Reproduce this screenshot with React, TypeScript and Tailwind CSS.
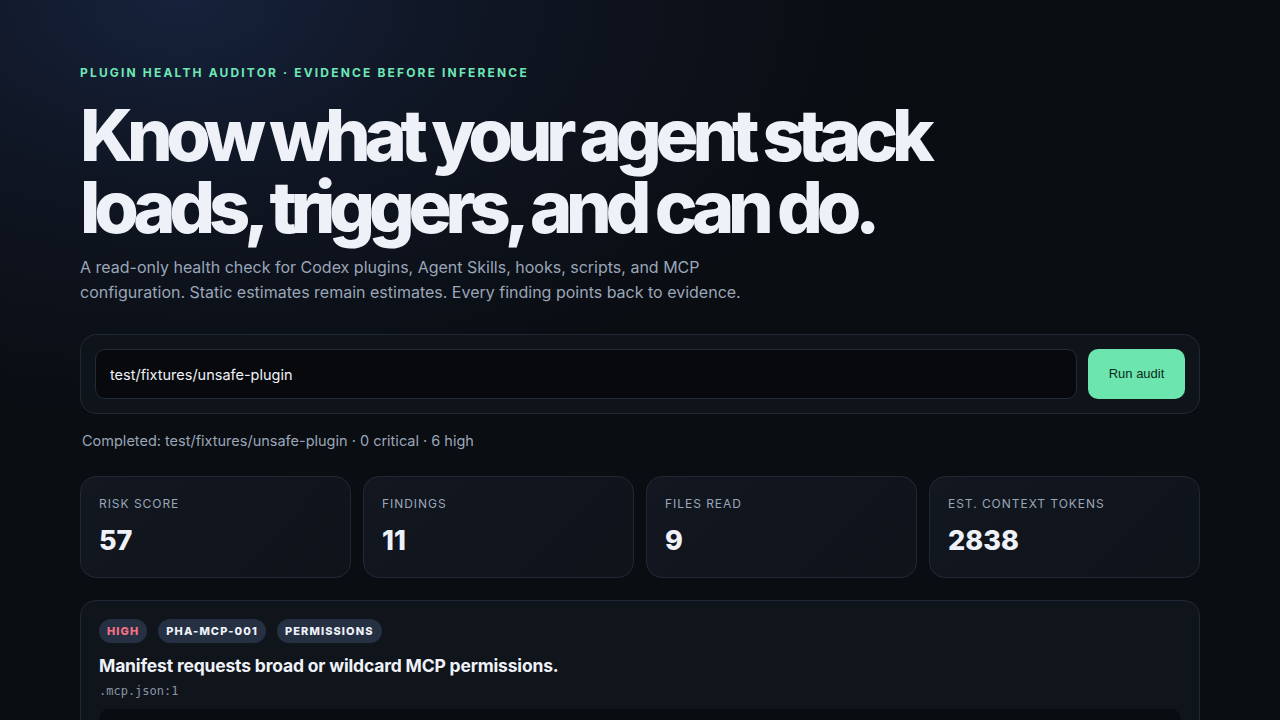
import { useState } from "react"

const STATS = [
    { label: "Risk score", value: "57" },
    { label: "Findings", value: "11" },
    { label: "Files read", value: "9" },
    { label: "Est. context tokens", value: "2838" },
]

export default function App() {
    const [target, setTarget] = useState("test/fixtures/unsafe-plugin")

    return (
        <div
            className="min-h-screen bg-[#0a0d12] text-[#e8edf5] bg-[radial-gradient(ellipse_700px_420px_at_180px_0px,#16223b_0%,#0f1522_45%,#0a0d12_100%)]"
            style={{ fontFamily: "Inter, 'Noto Sans', sans-serif" }}
        >
            <main className="mx-auto w-[1120px] pt-[64px] pb-16">
                <p className="text-[12px] font-bold uppercase tracking-[0.18em] text-[#6ee7b7]">
                    Plugin Health Auditor · Evidence Before Inference
                </p>

                <h1 className="mt-[17px] text-[72px] font-extrabold leading-[72px] tracking-[-0.087em] text-[#eef2f8]">
                    Know what your agent stack
                    <br />
                    loads, triggers, and can do.
                </h1>

                <p className="mt-[12px] max-w-[672px] text-[16px] leading-[25px] text-[#9aa6b8]">
                    A read-only health check for Codex plugins, Agent Skills, hooks, scripts, and MCP configuration.
                    Static estimates remain estimates. Every finding points back to evidence.
                </p>

                <form
                    onSubmit={(e) => e.preventDefault()}
                    className="mt-[29px] flex gap-[11px] rounded-2xl border border-[#212835] bg-[#0f131a] p-[14px]"
                >
                    <input
                        value={target}
                        onChange={(e) => setTarget(e.target.value)}
                        className="h-[50px] flex-1 rounded-[10px] border border-[#222938] bg-[#07090d] px-[14px] text-[14.5px] text-[#eef2f8] outline-none"
                    />
                    <button
                        type="submit"
                        className="h-[50px] w-[97px] rounded-[10px] bg-[#6ce6ae] text-[13px] text-[#0b2a1c]"
                        style={{ fontFamily: "'Liberation Sans', Arial, sans-serif" }}
                    >
                        Run audit
                    </button>
                </form>

                <p className="mt-[16px] pl-[2px] text-[14.5px] text-[#9aa6b8]">
                    Completed: test/fixtures/unsafe-plugin · 0 critical · 6 high
                </p>

                <div className="mt-[24px] grid grid-cols-4 gap-3">
                    {STATS.map((s) => (
                        <div
                            key={s.label}
                            className="h-[102px] rounded-2xl border border-[#212835] bg-[linear-gradient(135deg,#121720,#0f131a)] px-[18px] pt-[18px]"
                        >
                            <div className="text-[12px] uppercase tracking-[0.08em] text-[#9aa6b8]">{s.label}</div>
                            <div className="mt-[12px] text-[27px] font-extrabold leading-[32px] text-[#eef2f8]">{s.value}</div>
                        </div>
                    ))}
                </div>

                <div className="mt-[22px] rounded-2xl border border-[#212835] bg-[#10141b] px-[18px] pt-[18px] pb-[18px]">
                    <div className="flex gap-[11px]">
                        <span className="flex h-[24px] items-center rounded-full bg-[#263043] px-[8px] text-[11px] font-extrabold tracking-[0.1em] text-[#f87185]">
                            HIGH
                        </span>
                        <span className="flex h-[24px] items-center rounded-full bg-[#263043] px-[8px] text-[11px] font-extrabold tracking-[0.1em] text-[#eef2f8]">
                            PHA-MCP-001
                        </span>
                        <span className="flex h-[24px] items-center rounded-full bg-[#263043] px-[8px] text-[11px] font-extrabold tracking-[0.1em] text-[#eef2f8]">
                            PERMISSIONS
                        </span>
                    </div>
                    <h2 className="mt-[10px] text-[17.5px] font-bold tracking-[-0.01em] text-[#eef2f8]">
                        Manifest requests broad or wildcard MCP permissions.
                    </h2>
                    <div
                        className="mt-[3px] text-[12px] text-[#8a94a6]"
                        style={{ fontFamily: "'DejaVu Sans Mono', 'Liberation Mono', monospace" }}
                    >
                        .mcp.json:1
                    </div>
                    <pre
                        className="mt-[9px] h-[120px] rounded-[10px] bg-[#090c11] p-[14px] text-[12px] text-[#cbd5e1]"
                        style={{ fontFamily: "'DejaVu Sans Mono', 'Liberation Mono', monospace" }}
                    ></pre>
                </div>
            </main>
        </div>
    )
}
